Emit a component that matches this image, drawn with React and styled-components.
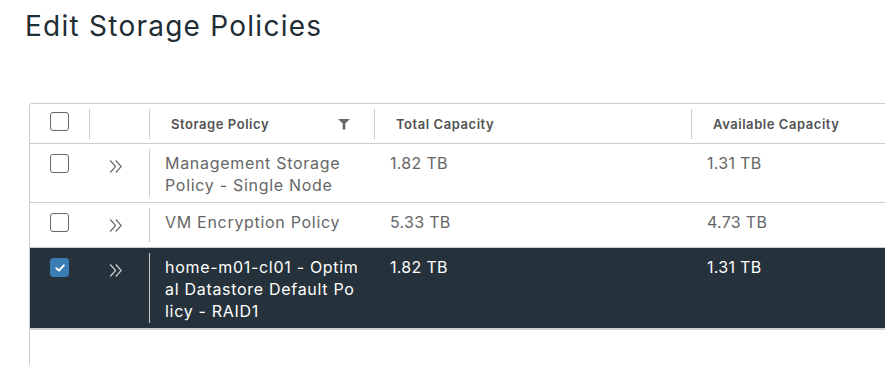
import React from 'react';
import styled, { createGlobalStyle } from 'styled-components';

const GlobalStyle = createGlobalStyle`
  html, body {
    margin: 0;
    padding: 0;
    background: #ffffff;
  }
  body {
    font-family: Inter, "Noto Sans", sans-serif;
    color: #565656;
  }
`;

const Page = styled.div`
  box-sizing: border-box;
  width: 885px;
  height: 365px;
  overflow: hidden;
  padding: 8px 0 0 25px;
`;

const Title = styled.h1`
  margin: 0;
  font-size: 28px;
  line-height: 36px;
  font-weight: 400;
  letter-spacing: 1.25px;
  color: #1f2d35;
`;

const COLS = '59px 60px 225px 317px 1fr';

const Table = styled.div`
  margin: 59px 0 0 4px;
  width: 900px;
  min-height: 300px;
  border: 1px solid #cccccc;
  border-radius: 3px 3px 0 0;
`;

const HeaderRow = styled.div`
  display: grid;
  grid-template-columns: ${COLS};
  box-sizing: border-box;
  height: 40px;
  padding: 5px 0 4px;
  border-bottom: 1px solid #cccccc;
`;

const HeaderCell = styled.div`
  display: flex;
  align-items: center;
  justify-content: ${(p) => (p.$center ? 'center' : 'space-between')};
  padding: ${(p) => (p.$center ? '0' : '0 24px 0 21px')};
  border-left: ${(p) => (p.$sep ? '1px solid #cccccc' : 'none')};
  font-size: 13px;
  font-weight: 600;
  letter-spacing: 0.55px;
  color: #525252;
  white-space: nowrap;
`;

const Row = styled.div`
  display: grid;
  grid-template-columns: ${COLS};
  box-sizing: border-box;
  min-height: ${(p) => (p.$selected ? '46px' : '45px')};
  padding: 5px 0;
  background: ${(p) => (p.$selected ? '#26323b' : '#ffffff')};
  border-bottom: ${(p) => (p.$selected ? '2px solid #cfcfcf' : '1px solid #cccccc')};
  color: ${(p) => (p.$selected ? '#ffffff' : '#666666')};
`;

const Cell = styled.div`
  padding: 3px 16px 1px;
  font-size: 16px;
  line-height: 22px;
  letter-spacing: 0.7px;
`;

const CheckCell = styled.div`
  display: flex;
  justify-content: center;
  align-items: flex-start;
  padding-top: 5px;
`;

const ExpandCell = styled.div`
  display: flex;
  justify-content: center;
  align-items: flex-start;
  padding: 10px 6px 0 0;
`;

const PolicyCell = styled(Cell)`
  border-left: 1px solid #cccccc;
  padding-left: 15px;
  padding-right: 15px;
  word-break: ${(p) => (p.$breakAll ? 'break-all' : 'normal')};
  overflow-wrap: anywhere;
`;

const NumberCell = styled(Cell)`
  letter-spacing: 0.3px;
`;

const Box = styled.span`
  display: inline-flex;
  align-items: center;
  justify-content: center;
  box-sizing: border-box;
  width: 19px;
  height: 19px;
  border-radius: 3px;
  border: 1px solid ${(p) => (p.$checked ? '#3a7cb4' : '#5f6a70')};
  background: ${(p) => (p.$checked ? '#3a7cb4' : '#ffffff')};
  margin-bottom: ${(p) => (p.$header ? '5px' : '0')};
`;

const Checkbox = ({ checked, header }) => (
  <Box $checked={checked} $header={header}>
    {checked && (
      <svg width="12" height="12" viewBox="0 0 12 12">
        <path d="M2.3 6.2 L5 8.6 L9.8 3.4" fill="none" stroke="#ffffff" strokeWidth="2" strokeLinecap="round" strokeLinejoin="round" />
      </svg>
    )}
  </Box>
);

const ExpandIcon = ({ selected }) => (
  <svg width="14" height="15" viewBox="0 0 14 15">
    <path
      d="M1.2 1.5 L6.6 7.5 L1.2 13.5 M6.8 1.5 L12.2 7.5 L6.8 13.5"
      fill="none"
      stroke={selected ? '#c8cdd0' : '#6a6a6a'}
      strokeWidth="1.2"
    />
  </svg>
);

const FilterIcon = () => (
  <svg width="12" height="11" viewBox="0 0 12 11">
    <path d="M0 0 H12 L7.3 4.6 V10.5 H4.7 V4.6 Z" fill="#666666" />
  </svg>
);

const rows = [
  { name: 'Management Storage Policy - Single Node', total: '1.82 TB', avail: '1.31 TB' },
  { name: 'VM Encryption Policy', total: '5.33 TB', avail: '4.73 TB' },
  {
    name: 'home-m01-cl01 - Optimal Datastore Default Policy - RAID1',
    total: '1.82 TB',
    avail: '1.31 TB',
    selected: true,
    breakAll: true,
  },
];

export default function App() {
  return (
    <Page>
      <GlobalStyle />
      <Title>Edit Storage Policies</Title>
      <Table>
        <HeaderRow>
          <HeaderCell $center>
            <Checkbox header />
          </HeaderCell>
          <HeaderCell $sep />
          <HeaderCell $sep>
            Storage Policy
            <FilterIcon />
          </HeaderCell>
          <HeaderCell $sep>Total Capacity</HeaderCell>
          <HeaderCell $sep>Available Capacity</HeaderCell>
        </HeaderRow>
        {rows.map((r) => (
          <Row key={r.name} $selected={r.selected}>
            <CheckCell>
              <Checkbox checked={r.selected} />
            </CheckCell>
            <ExpandCell>
              <ExpandIcon selected={r.selected} />
            </ExpandCell>
            <PolicyCell $breakAll={r.breakAll}>{r.name}</PolicyCell>
            <NumberCell>{r.total}</NumberCell>
            <NumberCell>{r.avail}</NumberCell>
          </Row>
        ))}
      </Table>
    </Page>
  );
}
